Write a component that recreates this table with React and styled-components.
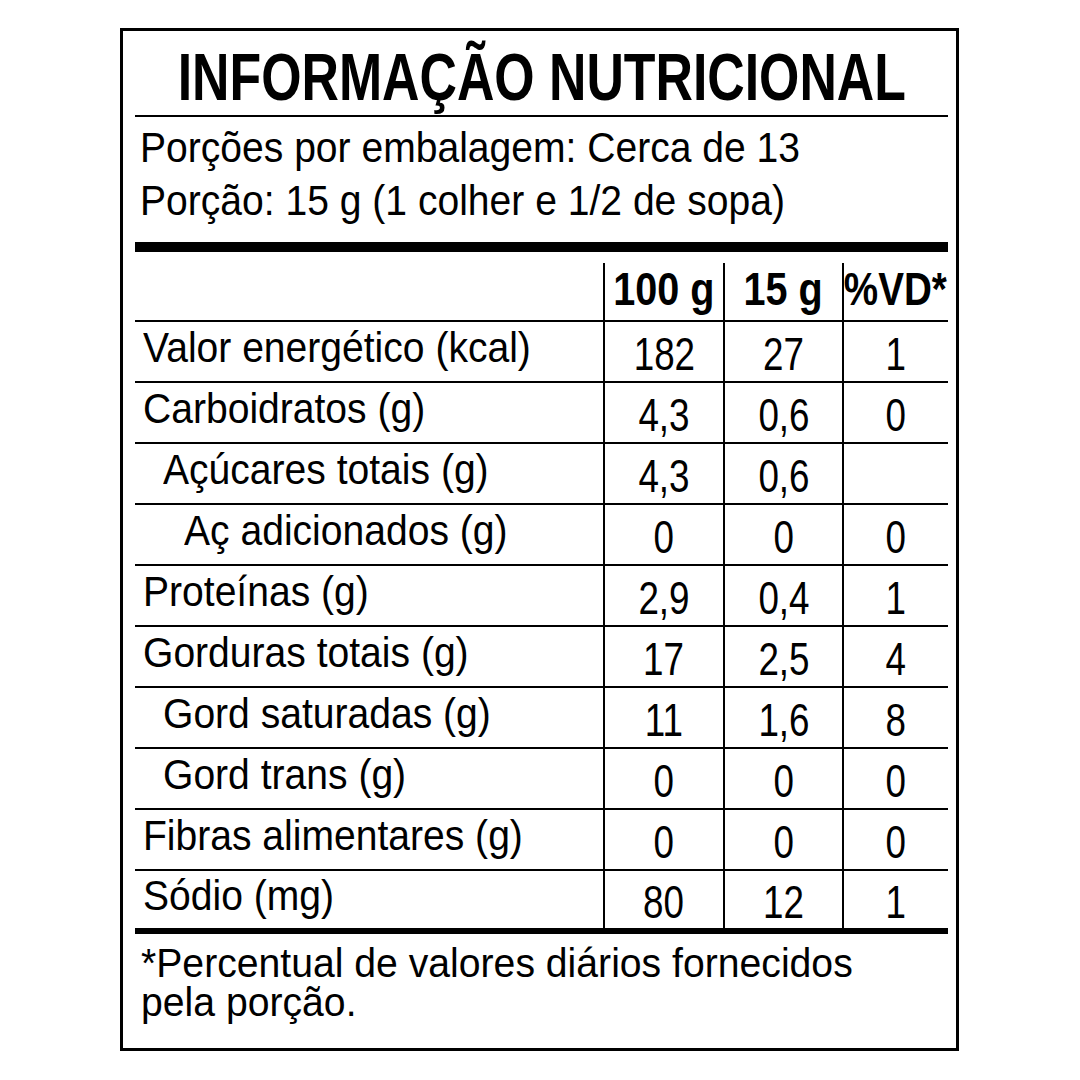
import React from "react";
import styled, { createGlobalStyle } from "styled-components";

const GlobalStyle = createGlobalStyle`
  body {
    margin: 0;
    background: #fff;
    color: #000;
    font-family: "Liberation Sans", Arial, sans-serif;
  }
`;

const Page = styled.div`
  width: 1080px;
  height: 1080px;
  box-sizing: border-box;
  padding: 28px 0 0 120px;
`;

const Label = styled.section`
  width: 839px;
  height: 1023px;
  box-sizing: border-box;
  border: 3px solid #000;
  padding: 0 8px 0 12px;
  display: flex;
  flex-direction: column;
`;

// the printed label uses a condensed face, so squeeze the regular one
const Squeeze = styled.span`
  display: inline-block;
  white-space: nowrap;
  transform: scaleX(${(p) => p.$x});
  transform-origin: ${(p) => p.$origin || "left"} center;
`;

const Title = styled.h1`
  margin: 0 0 5px;
  padding-top: 13px;
  font-size: 66px;
  line-height: 66px;
  font-weight: 700;
  display: flex;
  justify-content: center;
`;

const Rule = styled.div`
  height: ${(p) => p.$h}px;
  background: #000;
  flex-shrink: 0;
`;

const Serving = styled.div`
  padding: 4px 0 15px 5px;
  font-size: 42px;
  line-height: 53px;
`;

const Line = styled.div`
  height: ${(p) => p.$h}px;
`;

const Row = styled.div`
  display: grid;
  grid-template-columns: 468px 120px 119px 105px;
  height: ${(p) => p.$h}px;
  box-sizing: border-box;
  border-bottom: ${(p) => (p.$last ? "none" : "2px solid #000")};
`;

const Name = styled.div`
  display: flex;
  align-items: center;
  padding: 0 0 8px ${(p) => p.$indent}px;
  font-size: 42px;
  line-height: 1;
`;

const Value = styled.div`
  display: flex;
  align-items: center;
  justify-content: center;
  border-left: 2px solid #000;
  padding-top: 5px;
  font-size: 46px;
  line-height: 1;
`;

const Head = styled.div`
  display: flex;
  align-items: flex-end;
  justify-content: center;
  border-left: 2px solid #000;
  margin-top: 11px;
  padding-bottom: 8px;
  font-size: 46px;
  line-height: 1;
  font-weight: 700;
`;

const Footnote = styled.div`
  padding: 10px 0 0 6px;
  font-size: 41px;
  line-height: 39px;
`;

const indents = [8, 28, 49];

const rows = [
  ["Valor energético (kcal)", 0, "182", "27", "1"],
  ["Carboidratos (g)", 0, "4,3", "0,6", "0"],
  ["Açúcares totais (g)", 1, "4,3", "0,6", ""],
  ["Aç adicionados (g)", 2, "0", "0", "0"],
  ["Proteínas (g)", 0, "2,9", "0,4", "1"],
  ["Gorduras totais (g)", 0, "17", "2,5", "4"],
  ["Gord saturadas (g)", 1, "11", "1,6", "8"],
  ["Gord trans (g)", 1, "0", "0", "0"],
  ["Fibras alimentares (g)", 0, "0", "0", "0"],
  ["Sódio (mg)", 0, "80", "12", "1"],
];

const App = () => {
  return (
    <Page>
      <GlobalStyle />
      <Label>
        <Title>
          <Squeeze $x={0.785} $origin="center">
            INFORMAÇÃO NUTRICIONAL
          </Squeeze>
        </Title>
        <Rule $h={2} />
        <Serving>
          <Line $h={53}>
            <Squeeze $x={0.93}>Porções por embalagem: Cerca de 13</Squeeze>
          </Line>
          <Line $h={53}>
            <Squeeze $x={0.93}>Porção: 15 g (1 colher e 1/2 de sopa)</Squeeze>
          </Line>
        </Serving>
        <Rule $h={10} />
        <Row $h={70}>
          <div />
          <Head>
            <Squeeze $x={0.86} $origin="center">100 g</Squeeze>
          </Head>
          <Head>
            <Squeeze $x={0.86} $origin="center">15 g</Squeeze>
          </Head>
          <Head>
            <Squeeze $x={0.84} $origin="center">%VD*</Squeeze>
          </Head>
        </Row>
        {rows.map(([name, level, a, b, c], i) => {
          const last = i === rows.length - 1;
          return (
            <Row key={name} $h={last ? 57 : 61} $last={last}>
              <Name $indent={indents[level]}>
                <Squeeze $x={0.93}>{name}</Squeeze>
              </Name>
              {[a, b, c].map((v, j) => (
                <Value key={j}>
                  <Squeeze $x={0.8} $origin="center">{v}</Squeeze>
                </Value>
              ))}
            </Row>
          );
        })}
        <Rule $h={6} />
        <Footnote>
          <Squeeze $x={0.955}>*Percentual de valores diários fornecidos</Squeeze>
          <br />
          <Squeeze $x={0.955}>pela porção.</Squeeze>
        </Footnote>
      </Label>
    </Page>
  );
};

export default App;
